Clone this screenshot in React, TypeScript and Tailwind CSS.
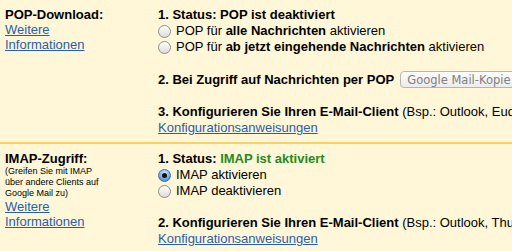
import React from "react";

function Radio({ checked }: { checked?: boolean }) {
  return (
    <span
      className={`inline-flex items-center justify-center w-[13px] h-[13px] rounded-full border mr-[5px] shrink-0 ${
        checked
          ? "border-[#4a6fa0] bg-[radial-gradient(circle_at_50%_30%,#d6ecff_0%,#6aa8ea_60%,#3477cc_100%)]"
          : "border-[#8c8c8c] bg-[linear-gradient(#ffffff,#dcdcdc)]"
      }`}
    >
      {checked && <span className="w-[5px] h-[5px] rounded-full bg-[#111]" />}
    </span>
  );
}

function Link({ children }: { children: React.ReactNode }) {
  return <a className="text-[#2a5db0] underline cursor-pointer">{children}</a>;
}

export default function App() {
  return (
    <div
      className="w-[512px] h-[251px] overflow-hidden bg-[#fff7d7] text-black text-[13px]"
      style={{ fontFamily: '"Liberation Sans", Arial, sans-serif' }}
    >
      {/* POP */}
      <div className="flex pt-[7px] pb-[6px] border-b-2 border-[#fad163]">
        <div className="w-[158px] pl-[5px] shrink-0">
          <div className="font-bold leading-[15px]">POP-Download:</div>
          <div className="leading-[15px]">
            <Link>Weitere</Link>
            <br />
            <Link>Informationen</Link>
          </div>
        </div>
        <div className="flex-1 min-w-0 whitespace-nowrap overflow-hidden leading-[16px]">
          <div className="font-bold">1. Status: POP ist deaktiviert</div>
          <div className="flex items-center">
            <Radio />
            <span>
              POP für <b>alle Nachrichten</b> aktivieren
            </span>
          </div>
          <div className="flex items-center">
            <Radio />
            <span>
              POP für <b>ab jetzt eingehende Nachrichten</b> aktivieren
            </span>
          </div>
          <div className="mt-[16px] flex items-center">
            <b>2. Bei Zugriff auf Nachrichten per POP</b>
            <span
              className="ml-[6px] inline-flex items-center h-[17px] pl-[6px] pr-[20px] rounded-[4px] border border-[#b5b5b5] bg-[linear-gradient(#fdfdfd,#ececec)] text-[#808080] text-[11.5px] shrink-0"
              style={{ fontFamily: '"DejaVu Sans", sans-serif' }}
            >
              Google Mail-Kopie im Posteingang behalten
            </span>
          </div>
          <div className="mt-[16px]">
            <b>3. Konfigurieren Sie Ihren E-Mail-Client</b> (Bsp.: Outlook, Eudora, Netscape Mail)
          </div>
          <div>
            <Link>Konfigurationsanweisungen</Link>
          </div>
        </div>
      </div>

      {/* IMAP */}
      <div className="flex pt-[7px] pb-[6px]">
        <div className="w-[158px] pl-[5px] shrink-0">
          <div className="font-bold leading-[15px]">IMAP-Zugriff:</div>
          <div className="text-[9px] leading-[11px]">
            (Greifen Sie mit IMAP
            <br />
            über andere Clients auf
            <br />
            Google Mail zu)
          </div>
          <div className="leading-[15px]">
            <Link>Weitere</Link>
            <br />
            <Link>Informationen</Link>
          </div>
        </div>
        <div className="flex-1 min-w-0 whitespace-nowrap overflow-hidden leading-[16px]">
          <div className="font-bold">
            1. Status: <span className="text-[#1e8c1e]">IMAP ist aktiviert</span>
          </div>
          <div className="flex items-center">
            <Radio checked />
            <span>IMAP aktivieren</span>
          </div>
          <div className="flex items-center">
            <Radio />
            <span>IMAP deaktivieren</span>
          </div>
          <div className="mt-[16px]">
            <b>2. Konfigurieren Sie Ihren E-Mail-Client</b> (Bsp.: Outlook, Thunderbird, iPhone)
          </div>
          <div>
            <Link>Konfigurationsanweisungen</Link>
          </div>
        </div>
      </div>
    </div>
  );
}
